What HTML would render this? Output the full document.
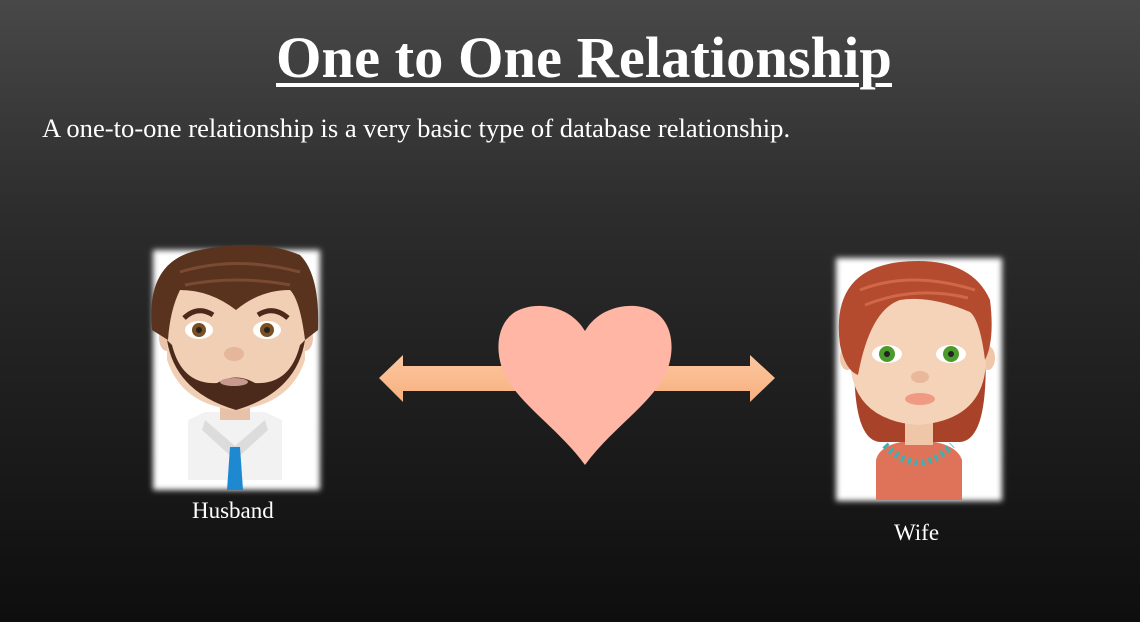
<!DOCTYPE html>
<html><head><style>
html,body{margin:0;padding:0}
body{width:1140px;height:622px;overflow:hidden;background:linear-gradient(#484848 0%,#2c2c2c 35%,#202020 60%,#0e0e0e 100%);position:relative;font-family:"Liberation Serif",serif;color:#fff}
.t{position:absolute;left:0;width:1168px;text-align:center;top:22px;font-size:58.5px;font-weight:bold;text-decoration:underline;text-decoration-thickness:4px;text-underline-offset:6px;line-height:72px}
.s{position:absolute;left:42px;top:113px;font-size:26.6px}
.l{position:absolute;font-size:23px}
</style></head><body>
<div class="t">One to One Relationship</div>
<div class="s">A one-to-one relationship is a very basic type of database relationship.</div>
<svg width="1140" height="622" style="position:absolute;left:0;top:0">
<defs>
<filter id="b" x="-20%" y="-20%" width="140%" height="140%"><feGaussianBlur stdDeviation="3"/></filter>
<linearGradient id="ar" x1="0" y1="0" x2="0" y2="1"><stop offset="0" stop-color="#fcc79f"/><stop offset="1" stop-color="#f7b07f"/></linearGradient>
</defs>
<path d="M379 378 L403 355 L403 366 L750 366 L750 355 L775 378 L750 402 L750 391 L403 391 L403 402 Z" fill="url(#ar)"/>
<path d="M585 331 C570 305 535 300 515 312 C495 325 495 355 505 375 C520 405 560 430 585 465 C610 430 650 405 665 375 C675 355 675 325 655 312 C635 300 600 305 585 331 Z" fill="#ffb6a5"/>
<rect x="153" y="250" width="167" height="240" fill="#fff" filter="url(#b)"/>
<g>
<path d="M188 480 L188 420 L205 412 L265 412 L282 420 L282 480 Z" fill="#f2f2f2"/>
<rect x="220" y="395" width="30" height="25" fill="#e8c2a8"/>
<path d="M205 420 L235 446 L265 420 L268 430 L235 460 L202 430Z" fill="#dcdcdc"/>
<path d="M230 447 L240 447 L243 490 L227 490Z" fill="#1e88d0"/>
<ellipse cx="167" cy="338" rx="8" ry="13" fill="#e9c4aa"/>
<ellipse cx="305" cy="338" rx="8" ry="13" fill="#e9c4aa"/>
<path d="M167 300 Q168 260 236 260 Q304 260 305 300 L305 360 Q290 405 236 410 Q182 405 167 360Z" fill="#f1cfb5"/>
<path d="M167 340 Q175 392 236 410 Q297 392 305 340 L300 345 Q290 385 255 383 Q236 372 217 383 Q182 385 172 345Z" fill="#4b2a1b"/>
<path d="M152 330 Q145 260 200 250 Q260 238 300 255 Q320 275 318 330 L305 340 Q300 300 290 290 Q260 290 236 310 Q210 290 180 290 Q170 310 168 340Z" fill="#5a331f"/>
<path d="M180 272 Q236 255 300 272 M185 285 Q236 275 290 285" stroke="#7a4a32" stroke-width="3" fill="none"/>
<path d="M184 318 Q198 305 213 315 M258 315 Q273 305 288 318" stroke="#4b2a1b" stroke-width="5" fill="none"/>
<ellipse cx="199" cy="330" rx="14" ry="9" fill="#fff"/><circle cx="199" cy="330" r="7" fill="#7a4f22"/><circle cx="199" cy="330" r="3" fill="#222"/>
<ellipse cx="267" cy="330" rx="14" ry="9" fill="#fff"/><circle cx="267" cy="330" r="7" fill="#7a4f22"/><circle cx="267" cy="330" r="3" fill="#222"/>
<ellipse cx="234" cy="354" rx="10" ry="7" fill="#e5b69a"/>
<ellipse cx="234" cy="382" rx="14" ry="4" fill="#c89a8f"/>
</g>
<rect x="836" y="258" width="166" height="243" fill="#fff" filter="url(#b)"/>
<g>
<path d="M876 500 L876 460 Q880 442 918 440 Q956 442 962 460 L962 500Z" fill="#df7359"/>
<path d="M855 340 Q850 440 880 442 L960 442 Q990 440 985 340Z" fill="#a8432a"/>
<rect x="905" y="410" width="28" height="35" fill="#efc6a8"/>
<path d="M885 445 Q918 480 952 445" stroke="#3fb0b2" stroke-width="7" fill="none" stroke-dasharray="3 4"/>
<ellipse cx="847" cy="358" rx="7" ry="12" fill="#efc6a8"/><ellipse cx="988" cy="358" rx="7" ry="12" fill="#efc6a8"/>
<path d="M850 320 Q850 300 918 298 Q986 300 986 320 L986 360 Q985 420 918 425 Q852 420 850 360Z" fill="#f5d3b8"/>
<path d="M840 345 Q830 270 900 262 Q970 255 990 300 Q995 340 985 360 Q980 320 970 312 Q930 295 900 300 Q870 310 858 375 Q845 370 840 345Z" fill="#b44a2e"/>
<path d="M860 290 Q910 270 975 290 M865 305 Q915 285 968 298" stroke="#d06848" stroke-width="3" fill="none"/>
<ellipse cx="887" cy="354" rx="15" ry="9" fill="#fff"/><circle cx="887" cy="354" r="8" fill="#4d9a2c"/><circle cx="887" cy="354" r="3" fill="#222"/>
<ellipse cx="951" cy="354" rx="15" ry="9" fill="#fff"/><circle cx="951" cy="354" r="8" fill="#4d9a2c"/><circle cx="951" cy="354" r="3" fill="#222"/>
<ellipse cx="920" cy="377" rx="9" ry="6" fill="#e9b89a"/>
<ellipse cx="920" cy="399" rx="15" ry="6" fill="#f09a84"/>
</g>
</svg>
<div class="l" style="left:192px;top:498px">Husband</div>
<div class="l" style="left:894px;top:520px">Wife</div>
</body></html>
